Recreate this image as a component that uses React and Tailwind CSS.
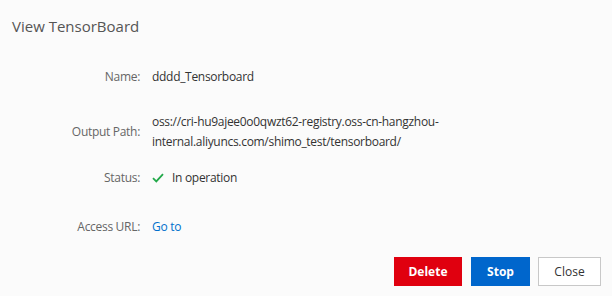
export default function App() {
  const font = { fontFamily: '"Open Sans", "Noto Sans", sans-serif' };
  return (
    <div className="w-[612px] h-[296px] bg-[#fbfbfb] flex flex-col text-[12px] text-[#333]" style={font}>
      <div className="pl-3 pt-4 h-9 text-[15px] leading-5 text-[#555]">View TensorBoard</div>

      <div className="flex flex-col mt-[31px] tracking-[-0.3px]">
        <div className="flex items-center h-5">
          <div className="w-[140px] text-right text-[#666]">Name:</div>
          <div className="ml-3">dddd_Tensorboard</div>
        </div>
        <div className="flex items-center mt-[25px]">
          <div className="w-[140px] text-right text-[#666]">Output Path:</div>
          <div className="ml-3 leading-5">
            <div>oss://cri-hu9ajee0o0qwzt62-registry.oss-cn-hangzhou-</div>
            <div>internal.aliyuncs.com/shimo_test/tensorboard/</div>
          </div>
        </div>
        <div className="flex items-center h-5 mt-[16px]">
          <div className="w-[140px] text-right text-[#666]">Status:</div>
          <div className="ml-3 flex items-center">
            <svg width="12" height="10" viewBox="0 0 12 10" className="mr-2">
              <path d="M1 5.2 L4.3 8.4 L11 1.2" fill="none" stroke="#23a94a" strokeWidth="1.8" />
            </svg>
            <span>In operation</span>
          </div>
        </div>
        <div className="flex items-center h-5 mt-[29px]">
          <div className="w-[140px] text-right text-[#666]">Access URL:</div>
          <a className="ml-3 text-[#0070cc]">Go to</a>
        </div>
      </div>

      <div className="flex justify-end gap-2 pr-[11px] mt-[20px]">
        <button className="w-[68px] h-[29px] bg-[#e0000f] text-white font-bold text-[12px]">Delete</button>
        <button className="w-[59px] h-[29px] bg-[#0066cc] text-white font-bold text-[12px] ml-[1px]">Stop</button>
        <button className="w-[63px] h-[29px] bg-white border border-[#c8c8c8] text-[#333] text-[12px]">Close</button>
      </div>
    </div>
  );
}
